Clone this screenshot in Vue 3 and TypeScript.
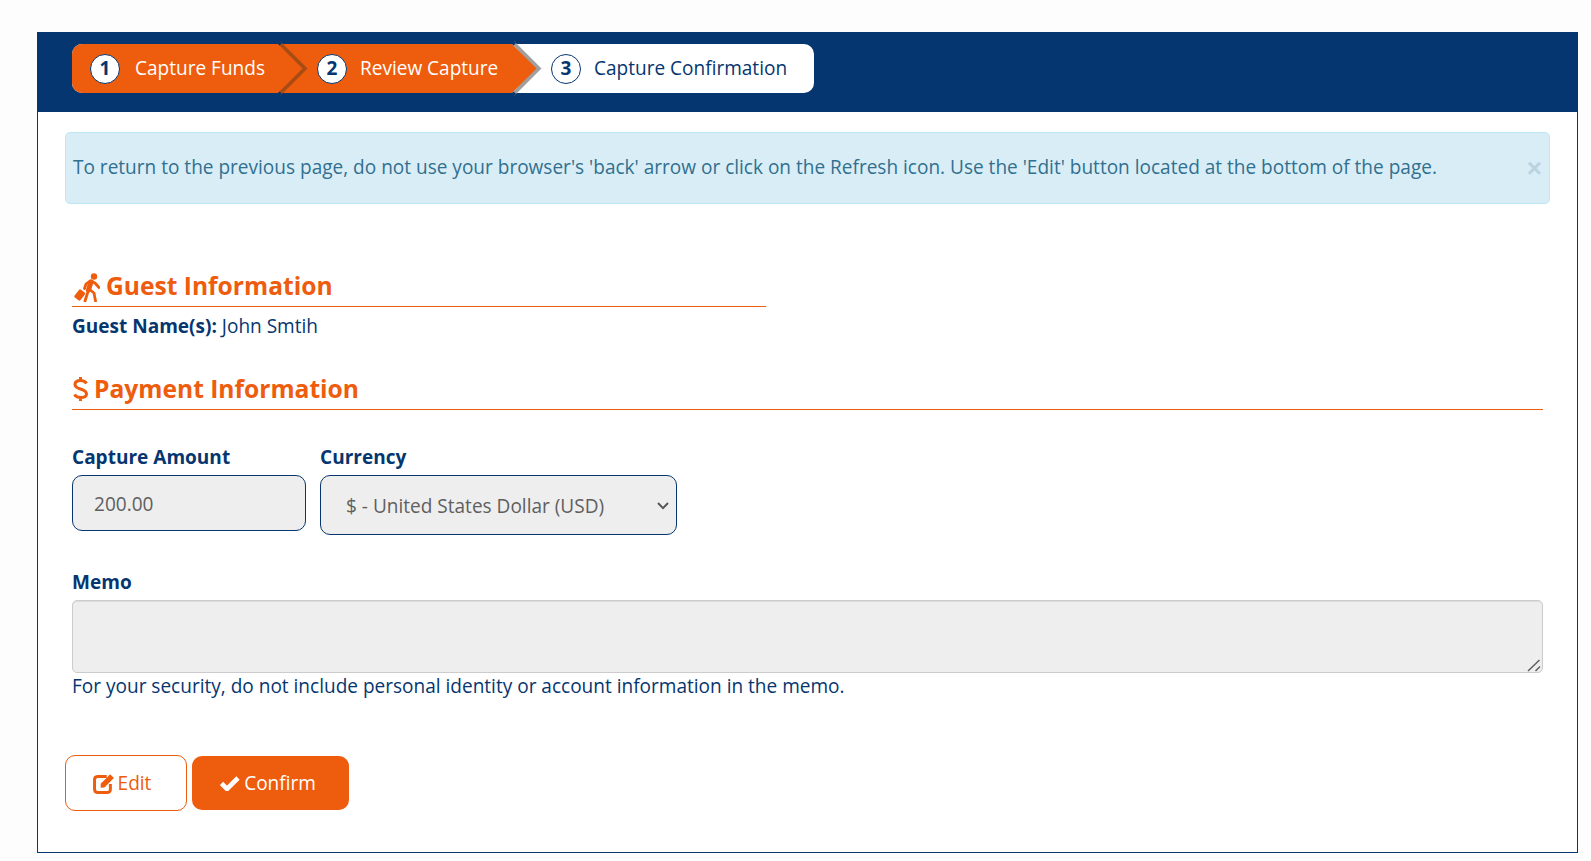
<template>
  <div class="page">
    <div class="panel">
      <div class="wizard-bar">
        <ol class="steps">
          <li v-for="(step, i) in steps" :key="step" class="step" :class="{ done: i < 2, last: i === 2 }">
            <span class="num">{{ i + 1 }}</span>
            <span class="label">{{ step }}</span>
            <svg v-if="i < 2" class="chevron" width="30" height="55" viewBox="0 0 30 55">
              <path d="M0 3 L26 27.5 L0 52 Z" fill="#ee5c0d" />
              <path d="M1 1.5 L27 27.5 L1 53.5" fill="none" :stroke="i === 0 ? '#a64c14' : '#a0a0a0'" stroke-width="3.5" />
              <path d="M0 .5 L2.8 3.3 M0 54.5 L2.8 51.7" stroke="#06366f" stroke-width="3.5" />
            </svg>
          </li>
        </ol>
      </div>

      <div class="body">
        <div class="alert">
          <span>To return to the previous page, do not use your browser's 'back' arrow or click on the Refresh icon. Use the 'Edit' button located at the bottom of the page.</span>
          <span class="close">×</span>
        </div>

        <section class="guest">
          <h2 class="heading guest-heading">
            <svg class="walker" width="27" height="29" viewBox="0 0 27 29">
              <circle cx="21" cy="3.5" r="3.2" fill="#ee5c0d" />
              <path d="M18 9 L15.5 17" fill="none" stroke="#ee5c0d" stroke-width="5" stroke-linecap="round" />
              <path d="M18 8 L22 10 L26 14.5 M17 8 L13 11 L11.5 15.5 M15.5 17 L12 28 M16.5 16.5 L21 20 L22.5 28" fill="none" stroke="#ee5c0d" stroke-width="2.8" stroke-linecap="round" stroke-linejoin="round" />
              <rect x="3" y="17" width="7.5" height="10" rx="1.5" transform="rotate(38 6.7 22)" fill="#ee5c0d" />
            </svg>
            <span>Guest Information</span>
          </h2>
          <p class="guest-name"><strong>Guest Name(s):</strong> John Smtih</p>
        </section>

        <h2 class="heading pay-heading">
          <svg class="dollar" width="15" height="26" viewBox="0 0 15 26">
            <path d="M13.5 7.5 C12 5 10 4.5 7.5 4.5 C4 4.5 2 6 2 8.5 C2 11 4 12 7.5 13 C11 14 13.5 15 13.5 18 C13.5 20.5 11 21.5 7.5 21.5 C5 21.5 3 21 1.5 18.5 M7.5 1 V4.5 M7.5 21.5 V25" fill="none" stroke="#ee5c0d" stroke-width="3" />
          </svg>
          <span>Payment Information</span>
        </h2>

        <div class="fields">
          <div class="field amount">
            <label for="amount">Capture Amount</label>
            <input id="amount" type="text" value="200.00" disabled />
          </div>
          <div class="field currency">
            <label for="currency">Currency</label>
            <div class="select-wrap">
              <select id="currency" disabled>
                <option>$ - United States Dollar (USD)</option>
              </select>
              <svg class="arrow" width="12" height="8" viewBox="0 0 12 8">
                <path d="M1 1 L6 6.2 L11 1" fill="none" stroke="#555" stroke-width="1.9" />
              </svg>
            </div>
          </div>
        </div>

        <div class="memo">
          <label for="memo">Memo</label>
          <div class="memo-wrap">
            <textarea id="memo" disabled></textarea>
            <svg class="grip" width="14" height="13" viewBox="0 0 14 13">
              <path d="M1 12 L12.5 1 M8.5 12 L13 7.5" fill="none" stroke="#5f5f5f" stroke-width="1.5" />
            </svg>
          </div>
          <p class="hint">For your security, do not include personal identity or account information in the memo.</p>
        </div>

        <div class="actions">
          <button class="btn edit" type="button">
            <svg width="22" height="21" viewBox="0 0 20 19">
              <path d="M12.5 3.2 H4 A2.8 2.8 0 0 0 1.4 6 V15 A2.8 2.8 0 0 0 4 17.7 H13 A2.8 2.8 0 0 0 15.8 15 V10" fill="none" stroke="#ee5c0d" stroke-width="2.7" />
              <path d="M7 9.8 L15.6 1.2 L19 4.6 L10.4 13.2 L7 13.4 Z" fill="#ee5c0d" />
            </svg>
            Edit
          </button>
          <button class="btn confirm" type="button">
            <svg width="20" height="16" viewBox="0 0 20 16">
              <path d="M1.5 8.5 L7 14 L18 3" fill="none" stroke="#fff" stroke-width="4.6" />
            </svg>
            Confirm
          </button>
        </div>
      </div>
    </div>
  </div>
</template>

<script setup lang="ts">
const steps: string[] = ['Capture Funds', 'Review Capture', 'Capture Confirmation']
</script>

<style>
html,
body {
  margin: 0;
  background: #fdfdfd;
}
</style>

<style scoped>
.page {
  height: 861px;
  box-sizing: border-box;
  padding: 32px 13px 8px 37px;
  font-family: "Open Sans", "Noto Sans", sans-serif;
  font-size: 19.04px;
  color: #06366f;
  overflow: hidden;
}

.panel {
  height: 821px;
  box-sizing: border-box;
  background: #fff;
  border: 1px solid #06366f;
  border-top: 0;
}

.wizard-bar {
  height: 80px;
  margin: 0 -1px;
  background: #06366f;
  padding: 12px 0 0 35px;
  box-sizing: border-box;
}

.steps {
  display: inline-flex;
  height: 49px;
  margin: 0;
  padding: 0;
  list-style: none;
  border-radius: 10px;
  background: #fff;
}

.step {
  position: relative;
  display: flex;
  align-items: center;
  height: 49px;
  box-sizing: border-box;
  padding-left: 39px;
}

.step.done {
  background: #ee5c0d;
  color: #fff;
}

.step:nth-child(1) {
  width: 206px;
  padding-left: 18px;
  border-radius: 10px 0 0 10px;
}

.step:nth-child(2) {
  width: 234px;
}

.step.last {
  width: 302px;
}

.num {
  width: 30px;
  height: 30px;
  box-sizing: border-box;
  border-radius: 50%;
  border: 1.5px solid #06366f;
  background: #fff;
  color: #06366f;
  font-weight: 700;
  font-size: 19px;
  line-height: 26px;
  text-align: center;
  flex: none;
}

.label {
  margin: -2px 0 0 13px;
  white-space: nowrap;
}

.step:nth-child(1) .label {
  margin-left: 15px;
}

.chevron {
  position: absolute;
  top: -3px;
  left: 100%;
  z-index: 1;
}

.body {
  padding: 20px 27px 0 27px;
}

.alert {
  position: relative;
  height: 72px;
  box-sizing: border-box;
  display: flex;
  align-items: center;
  padding: 0 7px 3px;
  background: #d9edf7;
  border: 1px solid #bce8f1;
  border-radius: 5px;
  color: #31708f;
  white-space: nowrap;
}

.close {
  position: absolute;
  right: 7px;
  top: 20px;
  font-family: "Liberation Sans", sans-serif;
  font-size: 26px;
  font-weight: 700;
  line-height: 30px;
  color: #b9d3e0;
}

.heading {
  margin: 0;
  display: flex;
  align-items: flex-end;
  color: #ee5c0d;
  font-size: 24.6px;
  font-weight: 700;
  line-height: 32px;
  border-bottom: 1px solid #ee5c0d;
  white-space: nowrap;
}

.guest {
  margin: 66px 0 0 7px;
}

.guest-heading {
  width: 694px;
  gap: 6px;
  height: 36px;
}

.guest-heading span {
  margin-bottom: 4px;
}

.walker {
  flex: none;
  margin: 0 0 4px 1px;
}

.guest-name {
  margin: 7px 0 0;
  line-height: 25px;
}

.guest-name strong {
  font-weight: 700;
}

.pay-heading {
  margin: 34px 0 0 7px;
  width: 1471px;
  height: 36px;
  gap: 6px;
}

.pay-heading span {
  margin-bottom: 4px;
}

.dollar {
  flex: none;
  margin: 0 0 7px 1px;
}

.fields {
  display: flex;
  gap: 14px;
  margin: 35px 0 0 7px;
}

.field {
  display: flex;
  flex-direction: column;
}

label {
  font-weight: 700;
  line-height: 25px;
}

input,
select,
textarea {
  box-sizing: border-box;
  font-family: inherit;
  font-size: 19.04px;
  color: #5f5f5f;
  background-color: #eee;
  opacity: 1;
}

.amount input {
  width: 234px;
  height: 56px;
  margin-top: 5px;
  padding: 2px 21px 0;
  border: 1px solid #06366f;
  border-radius: 10px;
}

.select-wrap {
  position: relative;
  margin-top: 5px;
}

.currency select {
  display: block;
  width: 357px;
  height: 60px;
  padding: 2px 25px 0;
  border: 1px solid #06366f;
  border-radius: 10px;
  appearance: none;
}

.arrow {
  position: absolute;
  right: 8px;
  top: 27px;
}

.memo {
  margin: 35px 0 0 7px;
}

.memo label {
  display: block;
}

.memo-wrap {
  position: relative;
  width: 1471px;
  margin-top: 5px;
}

.memo textarea {
  display: block;
  width: 1471px;
  height: 73px;
  border: 1px solid #ccc;
  border-radius: 5px;
  box-shadow: inset 0 1px 1px rgba(0, 0, 0, 0.08);
  resize: none;
}

.grip {
  position: absolute;
  right: 2px;
  bottom: 1px;
}

.hint {
  margin: 0;
  line-height: 27px;
}

.actions {
  display: flex;
  align-items: center;
  gap: 5px;
  margin-top: 55px;
}

.btn {
  height: 54px;
  box-sizing: border-box;
  display: inline-flex;
  align-items: center;
  justify-content: center;
  gap: 3px;
  font-family: inherit;
  font-size: 19.04px;
  border-radius: 10px;
  cursor: pointer;
}

.edit {
  width: 122px;
  height: 56px;
  padding: 0 8px 0 0;
  background: #fff;
  color: #ee5c0d;
  border: 1px solid #ee5c0d;
}

.confirm {
  width: 157px;
  padding: 0 5px 0 0;
  gap: 4px;
  background: #ee5c0d;
  color: #fff;
  border: 0;
}
</style>
